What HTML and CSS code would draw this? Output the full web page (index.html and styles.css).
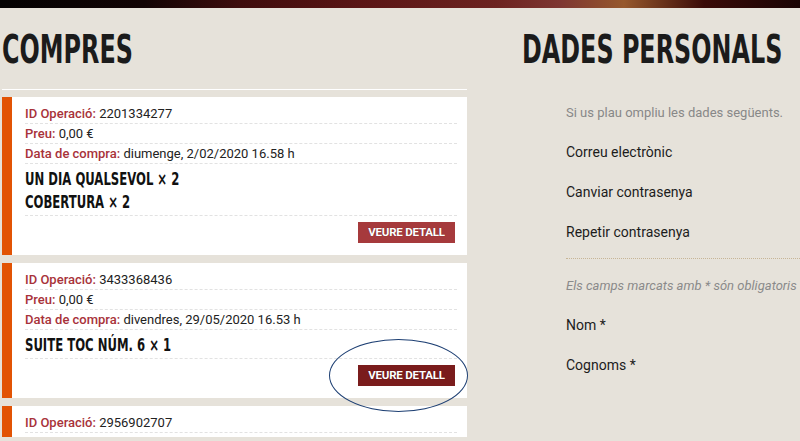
FILE: index.html
```html
<!DOCTYPE html>
<html lang="ca">
<head>
<meta charset="UTF-8">
<meta name="viewport" content="width=device-width, initial-scale=1.0">
<title>El meu compte</title>
<link rel="stylesheet" href="styles.css">
</head>
<body>
<div class="topbar"></div>
<div class="page">
    <div class="col-left">
        <h1 class="section-title"><span>Compres</span></h1>

        <div class="card">
            <div class="row"><b>ID Operació:</b> 2201334277</div>
            <div class="row"><b>Preu:</b> 0,00 €</div>
            <div class="row"><b>Data de compra:</b> diumenge, 2/02/2020 16.58 h</div>
            <div class="items">
                <div class="item"><span>Un dia qualsevol × 2</span></div>
                <div class="item"><span>Cobertura × 2</span></div>
            </div>
            <div class="actions">
                <a href="#" class="btn">Veure detall</a>
            </div>
        </div>

        <div class="card">
            <div class="row"><b>ID Operació:</b> 3433368436</div>
            <div class="row"><b>Preu:</b> 0,00 €</div>
            <div class="row"><b>Data de compra:</b> divendres, 29/05/2020 16.53 h</div>
            <div class="items">
                <div class="item"><span>Suite Toc núm. 6 × 1</span></div>
            </div>
            <div class="actions">
                <a href="#" class="btn btn-active">Veure detall<span class="circle"></span></a>
            </div>
        </div>

        <div class="card card-last">
            <div class="row"><b>ID Operació:</b> 2956902707</div>
        </div>
    </div>

    <div class="col-right">
        <h1 class="section-title"><span>Dades personals</span></h1>
        <div class="form">
            <p class="intro">Si us plau ompliu les dades següents.</p>
            <div class="field">Correu electrònic</div>
            <div class="field">Canviar contrasenya</div>
            <div class="field">Repetir contrasenya</div>
            <div class="sep"></div>
            <p class="note">Els camps marcats amb * són obligatoris</p>
            <div class="field">Nom *</div>
            <div class="field">Cognoms *</div>
        </div>
    </div>
</div>
</body>
</html>
```

FILE: styles.css
```css
body {
    margin: 0;
    background-color: #e6e2da;
    font-family: Roboto, "Liberation Sans", sans-serif;
    font-size: 13px;
    color: #222;
    overflow: hidden;
}

.topbar {
    height: 8px;
    background: linear-gradient(90deg, #040202 0%, #120404 18%, #3e0d0d 30%, #5a1515 45%, #6c2320 62%, #7e3632 70%, #96582c 78%, #3a0b08 88%, #1a0404 100%);
}

.page {
    display: flex;
    padding-left: 2px;
}

.col-left {
    width: 465px;
    flex-shrink: 0;
}

.col-right {
    margin-left: 55px;
    flex-shrink: 0;
    width: 276px;
}

.section-title {
    margin: 0;
    padding-top: 18px;
    height: 48px;
    line-height: 48px;
    font-family: "DejaVu Sans Condensed", "Liberation Sans", sans-serif;
    font-size: 39px;
    font-weight: 700;
    text-transform: uppercase;
    color: #1b1b1b;
    white-space: nowrap;
}
.section-title span {
    display: inline-block;
    transform: scaleX(0.68);
    transform-origin: left center;
}

.col-left .section-title {
    padding-bottom: 15px;
    border-bottom: 1px solid #fff;
    margin-bottom: 7px;
}

.card {
    background: #fff;
    border-left: 10px solid #e25304;
    padding: 7px 10px 0 13px;
    margin-bottom: 8px;
}
.card-last {
    padding-bottom: 4px;
}

.row {
    line-height: 19px;
    border-bottom: 1px dashed #e2e2e2;
}
.row b {
    color: #a8323a;
    font-weight: 500;
}

.items {
    padding: 3px 0 2px;
    border-bottom: 1px dashed #e2e2e2;
}
.item {
    line-height: 23px;
    height: 23px;
    font-family: "DejaVu Sans Condensed", "Liberation Sans", sans-serif;
    font-size: 18px;
    font-weight: 700;
    text-transform: uppercase;
    color: #111;
    white-space: nowrap;
}
.item span {
    display: inline-block;
    transform: scaleX(0.72);
    transform-origin: left center;
}

.actions {
    display: flex;
    justify-content: flex-end;
    padding: 6px 2px 12px 0;
}

.btn {
    position: relative;
    display: block;
    width: 97px;
    height: 21px;
    line-height: 21px;
    text-align: center;
    background: #a63a3c;
    color: #fff;
    font-size: 11.5px;
    font-weight: 700;
    text-transform: uppercase;
    text-decoration: none;
    letter-spacing: -0.2px;
    text-shadow: 0 0 1px rgba(0, 0, 0, 0.4);
}
.btn-active {
    background: #7a1c1c;
}

/* marca de l'anotació sobre el botó */
.circle {
    position: absolute;
    left: -29px;
    top: -26px;
    width: 137px;
    height: 71px;
    border: 1px solid #1d3f73;
    border-radius: 50%;
}

.form {
    padding-left: 44px;
}

.intro {
    margin: 29px 0 0;
    line-height: 20px;
    color: #888;
}

.field {
    margin-top: 19px;
    line-height: 20px;
    height: 21px;
    font-size: 14px;
    color: #1c1c1c;
}

.sep {
    margin-top: 15px;
    margin-right: -60px;
    border-top: 1px dotted #c7b596;
}

.note {
    margin: 17px 0 0;
    line-height: 20px;
    font-size: 13px;
    font-style: italic;
    color: #8a8a8a;
    white-space: nowrap;
}
```
